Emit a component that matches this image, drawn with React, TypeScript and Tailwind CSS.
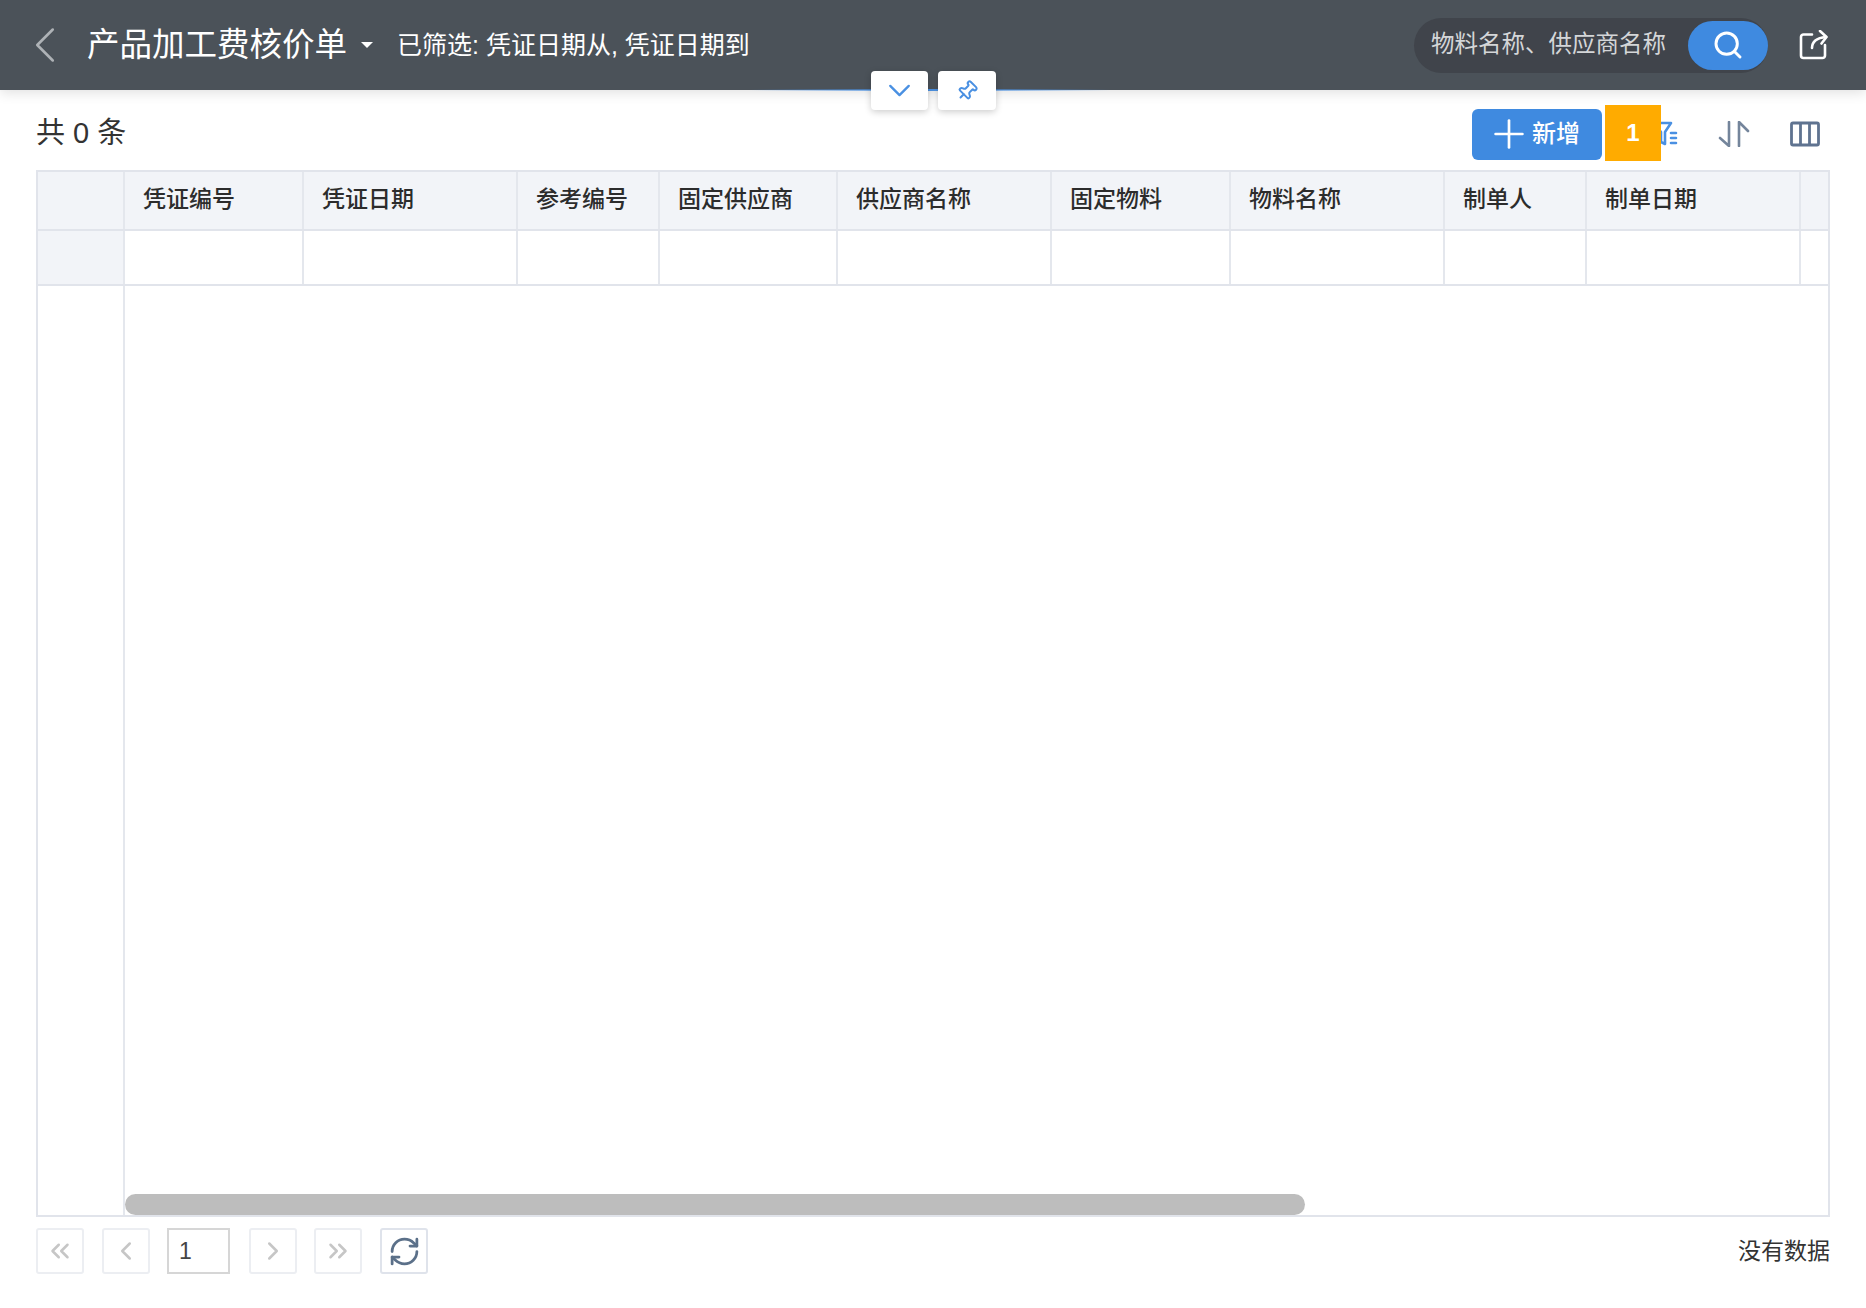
import {
  ChevronDown,
  ChevronLeft,
  ChevronRight,
  ChevronsLeft,
  ChevronsRight,
  Pin,
  Plus,
  RefreshCw,
  Search,
} from "lucide-react";

const columns = [
  { label: "凭证编号", width: "w-[179px]" },
  { label: "凭证日期", width: "w-[214px]" },
  { label: "参考编号", width: "w-[142px]" },
  { label: "固定供应商", width: "w-[178px]" },
  { label: "供应商名称", width: "w-[214px]" },
  { label: "固定物料", width: "w-[179px]" },
  { label: "物料名称", width: "w-[214px]" },
  { label: "制单人", width: "w-[142px]" },
  { label: "制单日期", width: "w-[214px]" },
];

function ShareIcon() {
  return (
    <svg width="30" height="30" viewBox="0 0 30 30" fill="none" stroke="#fff" strokeWidth="2.600" strokeLinecap="round" strokeLinejoin="round">
      <path d="M13 4.500H4.500A2.500 2.500 0 0 0 2 7v18.500A2.500 2.500 0 0 0 4.500 28h19a2.500 2.500 0 0 0 2.500-2.500V15" />
      <path d="M13 18c0-6 4-10 14-11" />
      <path d="M21 1l6.500 6-5 6.500" />
    </svg>
  );
}

function SortIcon() {
  return (
    <svg width="32" height="26" viewBox="0 0 32 26" fill="none" stroke="#74859b" strokeWidth="2.600" strokeLinecap="round" strokeLinejoin="round">
      <path d="M11 1v24L2 17" />
      <path d="M21 25V1l9 9" />
    </svg>
  );
}

function ColumnsIcon() {
  return (
    <svg width="30" height="26" viewBox="0 0 30 26" fill="none" stroke="#5f7390" strokeWidth="2.800">
      <rect x="1.500" y="2" width="27" height="22" rx="1.500" />
      <path d="M10.500 2v22M19.500 2v22" />
    </svg>
  );
}

function FilterIcon() {
  return (
    <svg width="28" height="26" viewBox="0 0 28 26" fill="none" stroke="#4a90e2" strokeWidth="2.600" strokeLinecap="round" strokeLinejoin="round">
      <path d="M2 2h17l-6 9v12l-4-2V11z" />
      <path d="M19 12h5M19 17h5M19 22h5" />
    </svg>
  );
}

function PagerButton({ children, active }: { children: React.ReactNode; active?: boolean }) {
  return (
    <button
      className={`flex h-[46px] w-[48px] items-center justify-center rounded-[3px] border-2 ${
        active ? "border-[#dfe3eb] text-[#5b7089]" : "border-[#eceef2] text-[#c6c6c6]"
      }`}
    >
      {children}
    </button>
  );
}

export default function App() {
  return (
    <div className="relative flex h-[1308px] flex-col bg-white font-['Liberation_Sans','Noto_Sans_CJK_SC',sans-serif]">
      <header className="relative flex h-[90px] shrink-0 items-center bg-[#4b5259] pl-[14px] pr-[37px] shadow-[0_3px_12px_rgba(0,0,0,0.12)]">
        <ChevronLeft size={62} strokeWidth={1} className="text-[#aeb2b6]" />
        <h1 className="ml-[11px] text-[32.500px] leading-none text-white">产品加工费核价单</h1>
        <span className="ml-[14px] h-0 w-0 border-x-[6px] border-t-[6px] border-x-transparent border-t-white" />
        <p className="ml-[24px] text-[25px] leading-none text-white">已筛选: 凭证日期从, 凭证日期到</p>
        <div className="ml-auto flex h-[55px] w-[354px] items-center justify-between rounded-full bg-[#40444b] pl-[17px] pr-0">
          <span className="text-[23.500px] text-[#d4d6d8]">物料名称、供应商名称</span>
          <button className="flex h-[49px] w-[80px] items-center justify-center rounded-full bg-[#3f8ae0]">
            <Search size={32} strokeWidth={2.2} className="text-white" />
          </button>
        </div>
        <div className="ml-[31px]">
          <ShareIcon />
        </div>
        <div className="absolute bottom-0 left-[750px] h-[2px] w-[360px] translate-y-[1px] bg-gradient-to-r from-transparent via-[#4a90e2] to-transparent" />
      </header>

      {/* the collapse and pin tabs hang over the header's lower edge */}
      <div className="absolute left-[871px] top-[71px] flex gap-[10px]">
        <button className="flex h-[39px] w-[57px] items-center justify-center rounded-[4px] bg-white shadow-[0_2px_7px_rgba(0,0,0,0.2)]">
          <ChevronDown size={37} strokeWidth={1.5} className="text-[#4a90e2]" />
        </button>
        <button className="flex h-[39px] w-[58px] items-center justify-center rounded-[4px] bg-white shadow-[0_2px_7px_rgba(0,0,0,0.2)]">
          <Pin size={22} strokeWidth={2.2} className="rotate-45 text-[#4a90e2]" />
        </button>
      </div>

      <div className="flex h-[80px] shrink-0 items-center pl-[36px] pr-[46px] pt-[8px]">
        <span className="text-[29px] text-[#333]">共 0 条</span>
        <div className="relative ml-auto flex items-center">
          <button className="flex h-[51px] w-[130px] items-center justify-center rounded-[6px] bg-[#3f8ae0] pr-[8px] text-[24px] font-medium text-white">
            <Plus size={46} strokeWidth={1.4} />
            新增
          </button>
          <div className="ml-[50px]">
            <FilterIcon />
          </div>
          <div className="ml-[38px]">
            <SortIcon />
          </div>
          <div className="ml-[40px]">
            <ColumnsIcon />
          </div>
          <span className="absolute left-[133px] top-[-4px] flex h-[56px] w-[56px] items-center justify-center bg-[#ffab00] text-[24px] font-bold text-white">
            1
          </span>
        </div>
      </div>

      <div className="mx-[36px] flex h-[1047px] shrink-0 flex-col border-2 border-[#e1e4eb]">
        <div className="flex h-[59px] shrink-0 border-b-2 border-[#e1e4eb] bg-[#f2f4f8]">
          <div className="w-[85px] shrink-0" />
          {columns.map((col) => (
            <div
              key={col.label}
              className={`flex shrink-0 items-center border-l-2 border-[#e4e7ed] pb-[2px] pl-[18px] text-[23px] font-medium text-[#2c2c2c] ${col.width}`}
            >
              {col.label}
            </div>
          ))}
          <div className="flex-1 border-l-2 border-[#e4e7ed]" />
        </div>
        <div className="flex h-[55px] shrink-0 border-b-2 border-[#e1e4eb]">
          <div className="w-[85px] shrink-0 bg-[#f2f4f8]" />
          {columns.map((col) => (
            <div key={col.label} className={`shrink-0 border-l-2 border-[#e4e7ed] ${col.width}`} />
          ))}
          <div className="flex-1 border-l-2 border-[#e4e7ed]" />
        </div>
        <div className="flex min-h-0 flex-1">
          <div className="w-[85px] shrink-0" />
          <div className="flex flex-1 flex-col justify-end border-l-2 border-[#e4e7ed]">
            <div className="h-[21px] w-[1180px] rounded-full bg-[#bdbdbd]" />
          </div>
        </div>
      </div>

      <div className="mx-[36px] mt-[11px] flex items-center">
        <PagerButton>
          <ChevronsLeft size={30} strokeWidth={2} />
        </PagerButton>
        <div className="ml-[18px]">
          <PagerButton>
            <ChevronLeft size={30} strokeWidth={2} />
          </PagerButton>
        </div>
        <div className="ml-[17px] flex h-[46px] w-[63px] items-center border-2 border-[#d6d6d6] pl-[10px] text-[23px] text-[#444]">1</div>
        <div className="ml-[19px]">
          <PagerButton>
            <ChevronRight size={30} strokeWidth={2} />
          </PagerButton>
        </div>
        <div className="ml-[17px]">
          <PagerButton>
            <ChevronsRight size={30} strokeWidth={2} />
          </PagerButton>
        </div>
        <div className="ml-[18px]">
          <PagerButton active>
            <RefreshCw size={33} strokeWidth={2} />
          </PagerButton>
        </div>
        <span className="ml-auto text-[23px] text-[#333]">没有数据</span>
      </div>
    </div>
  );
}
